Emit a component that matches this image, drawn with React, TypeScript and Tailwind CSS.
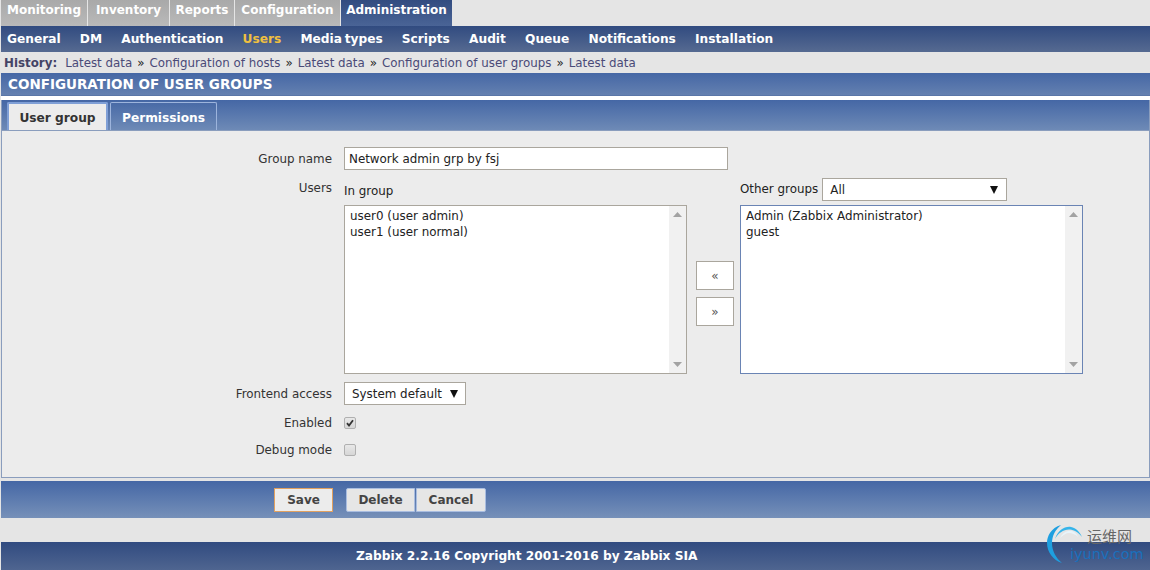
import React from 'react';

const font = "font-['DejaVu_Sans',sans-serif]";

const topTabs = [
  { label: 'Monitoring', width: 'w-[86px]' },
  { label: 'Inventory', width: 'w-[81px]' },
  { label: 'Reports', width: 'w-[64px]' },
  { label: 'Configuration', width: 'w-[105px]' },
];

const subItems = ['General', 'DM', 'Authentication', 'Users', 'Media types', 'Scripts', 'Audit', 'Queue', 'Notifications', 'Installation'];

const ScrollArrows = () => (
  <div className="w-[17px] h-full bg-[#f1f1f1] flex flex-col items-center justify-between py-[6px] shrink-0">
    <svg width="9" height="5" viewBox="0 0 9 5"><path d="M4.5 0 9 5H0z" fill="#a3a3a3" /></svg>
    <svg width="9" height="5" viewBox="0 0 9 5"><path d="M0 0h9L4.5 5z" fill="#a3a3a3" /></svg>
  </div>
);

const ListBox = ({ items, border }: { items: string[]; border: string }) => (
  <div className={`w-[343px] h-[169px] bg-white border flex ${border}`}>
    <div className="flex-1 px-[5px] pt-[2px] text-[11.9px] leading-[16px] text-[#222]">
      {items.map((item) => (
        <div key={item}>{item}</div>
      ))}
    </div>
    <ScrollArrows />
  </div>
);

const Caret = () => (
  <svg width="8" height="8" viewBox="0 0 8 8"><path d="M0 0h8L4 8z" fill="#111" /></svg>
);

const Label = ({ children, className = '' }: { children: React.ReactNode; className?: string }) => (
  <div className={`w-[331px] text-right text-[11.9px] leading-[16px] text-[#333] shrink-0 ${className}`}>{children}</div>
);

export default function App() {
  return (
    <div className={`relative w-[1150px] h-[570px] overflow-hidden bg-[#e5e5e5] flex flex-col ${font}`}>
      {/* Top menu */}
      <div className="h-[26px] flex pl-px gap-px shrink-0 text-[12px] font-bold leading-[20px]">
        {topTabs.map((tab) => (
          <div key={tab.label} className={`${tab.width} h-full bg-gradient-to-b from-[#a9a9a9] to-[#b9b9b9] text-white text-center`}>
            {tab.label}
          </div>
        ))}
        <div className="w-[111px] h-full bg-gradient-to-b from-[#324c80] to-[#4a6496] text-white text-center">Administration</div>
      </div>

      {/* Sub menu */}
      <div className="h-[26px] ml-px flex items-center pl-[6px] gap-[19.2px] shrink-0 bg-gradient-to-b from-[#314b80] to-[#566a91] text-[12.2px] font-bold text-white [word-spacing:-1.5px]">
        {subItems.map((item) => (
          <span key={item} className={item === 'Users' ? 'text-[#f0c040]' : ''}>{item}</span>
        ))}
      </div>

      {/* History */}
      <div className="h-[21px] flex items-center pl-[4px] pt-[2px] shrink-0 text-[11.85px] text-[#4a4a78] gap-[5px]">
        <span className="font-bold text-[#444466] mr-[3px]">History:</span>
        <span>Latest data</span><span className="text-[#222]">»</span>
        <span>Configuration of hosts</span><span className="text-[#222]">»</span>
        <span>Latest data</span><span className="text-[#222]">»</span>
        <span>Configuration of user groups</span><span className="text-[#222]">»</span>
        <span>Latest data</span>
      </div>

      {/* Title */}
      <div className="h-[23px] ml-px flex items-center pl-[7px] pt-px shrink-0 bg-gradient-to-b from-[#4567a5] to-[#6480b0] border-b border-[#5a76a8] text-[13.5px] font-bold text-white">
        CONFIGURATION OF USER GROUPS
      </div>
      <div className="h-[4px] bg-white ml-px shrink-0" />

      {/* Form panel */}
      <div className="h-[378px] ml-px border border-t-0 border-[#8a9dbd] bg-[#ececec] flex flex-col shrink-0">
        <div className="h-[31px] flex items-end pl-[5px] gap-[2px] shrink-0 bg-gradient-to-b from-[#4567a5] to-[#6e8ab6] border-b border-[#8a9dbd] text-[12.2px] font-bold">
          <div className="w-[101px] h-[28px] pt-[3px] flex items-center justify-center bg-[#ececec] border-2 border-b-0 border-[#7f9fd6] rounded-t-[2px] text-[#333]">User group</div>
          <div className="w-[107px] h-[28px] pt-[3px] flex items-center justify-center border border-b-0 border-[#9db4dc] rounded-t-[2px] text-white">Permissions</div>
        </div>

        <div className="flex flex-col pt-[16px] text-[11.9px] text-[#222] -ml-px">
          <div className="flex items-center h-[23px]">
            <Label>Group name</Label>
            <div className="ml-[12px] w-[384px] h-[23px] bg-white border border-[#aaa69d] pl-[4px] pt-[2px] flex items-center">Network admin grp by fsj</div>
          </div>

          <div className="flex mt-[8px]">
            <Label className="pt-[2px]">Users</Label>
            <div className="ml-[12px] flex">
              <div className="flex flex-col">
                <div className="h-[27px] pt-[5px] leading-[16px]">In group</div>
                <ListBox items={['user0 (user admin)', 'user1 (user normal)']} border="border-[#aaa69d]" />
              </div>
              <div className="w-[53px] flex flex-col items-start pl-[9px] pt-[83px] gap-[7px]">
                <div className="w-[38px] h-[29px] bg-white border border-[#aaa69d] flex items-center justify-center text-[12px] text-[#555]">«</div>
                <div className="w-[38px] h-[29px] bg-white border border-[#aaa69d] flex items-center justify-center text-[12px] text-[#555]">»</div>
              </div>
              <div className="flex flex-col">
                <div className="h-[27px] flex items-start">
                  <span className="mt-[3px] leading-[16px]">Other groups</span>
                  <div className="ml-[4px] w-[185px] h-[23px] bg-white border border-[#aaa69d] flex items-center justify-between pl-[7px] pr-[8px]">
                    <span className="pt-[2px]">All</span>
                    <Caret />
                  </div>
                </div>
                <ListBox items={['Admin (Zabbix Administrator)', 'guest']} border="border-[#6a84b4]" />
              </div>
            </div>
          </div>

          <div className="flex items-center h-[23px] mt-[8px]">
            <Label>Frontend access</Label>
            <div className="ml-[12px] w-[122px] h-[23px] bg-white border border-[#aaa69d] flex items-center justify-between pl-[7px] pr-[7px]">
              <span className="pt-[2px]">System default</span>
              <Caret />
            </div>
          </div>

          <div className="flex items-center h-[16px] mt-[10px]">
            <Label>Enabled</Label>
            <div className="ml-[12px] w-[12px] h-[12px] rounded-[2px] border border-[#b0b0b0] bg-gradient-to-b from-[#e8e8e8] to-[#d6d6d6] flex items-center justify-center">
              <svg width="10" height="10" viewBox="0 0 10 10"><path d="M2 5.2 4 7.6 8 2.2" fill="none" stroke="#333" strokeWidth="1.8" /></svg>
            </div>
          </div>

          <div className="flex items-center h-[16px] mt-[11px]">
            <Label>Debug mode</Label>
            <div className="ml-[12px] w-[12px] h-[12px] rounded-[2px] border border-[#b0b0b0] bg-gradient-to-b from-[#e8e8e8] to-[#d6d6d6]" />
          </div>
        </div>
      </div>

      {/* Button bar */}
      <div className="mt-[3px] ml-px h-[37px] flex items-center pl-[273px] shrink-0 bg-gradient-to-b from-[#4567a5] to-[#7690b8] text-[12px] font-bold text-[#444]">
        <div className="w-[59px] h-[24px] flex items-center justify-center bg-[#ececec] border border-[#e0a060]">Save</div>
        <div className="ml-[13px] w-[69px] h-[24px] flex items-center justify-center bg-[#e6e6e6] border border-[#a9bde0] rounded-l-[2px]">Delete</div>
        <div className="ml-px w-[70px] h-[24px] flex items-center justify-center bg-[#e6e6e6] border border-[#a9bde0] rounded-r-[2px]">Cancel</div>
      </div>

      <div className="h-[24px] shrink-0" />

      {/* Footer */}
      <div className="h-[28px] ml-px flex items-center pl-[355px] shrink-0 bg-gradient-to-b from-[#314b80] to-[#4f6590] text-[12.2px] font-bold text-white">
        Zabbix 2.2.16 Copyright 2001-2016 by Zabbix SIA
      </div>

      {/* Watermark */}
      <div className="absolute left-[1047px] top-[522px] w-[103px] h-[48px]">
        <svg className="absolute left-0 top-0" width="44" height="44" viewBox="0 0 44 44">
          <path d="M14 3C4 6 0 14 0 21C0 30 6 38 15 41C9 36 5 29 5 21C5 14 8 8 14 3z" fill="#1e9fe0" />
          <path d="M8 17C11 8 18 4 24 5C29 6 33 10 35 15C31 10 27 8 23 7.5C17 7 11 11 8 17z" fill="#35b4ea" />
          <path d="M13 16C16 10 21 8 25 9C28 10 30 12 31 15C28 12 25 11 22 11C19 11 16 13 13 16z" fill="#e8f4fa" />
        </svg>
        <span className="absolute left-[40px] top-[5px] text-[15px] leading-[18px] text-[#666] font-['Noto_Sans_CJK_SC',sans-serif]">运维网</span>
        <span className="absolute left-[23px] top-[24px] text-[14.4px] leading-[16px] text-[#1a70bc]">iyunv.com</span>
      </div>
    </div>
  );
}
